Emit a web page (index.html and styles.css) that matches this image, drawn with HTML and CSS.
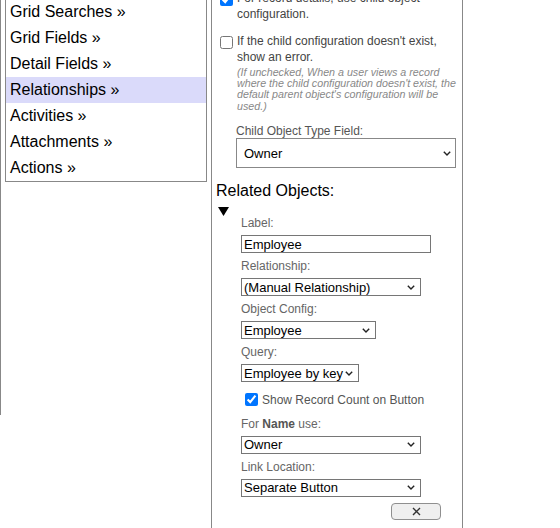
FILE: index.html
```html
<!DOCTYPE html>
<html>
<head>
<meta charset="utf-8">
<link rel="stylesheet" href="styles.css">
</head>
<body>
<div class="page">
  <div class="sidebar">
    <ul class="menu">
      <li>Grid Searches »</li>
      <li>Grid Fields »</li>
      <li>Detail Fields »</li>
      <li class="active">Relationships »</li>
      <li>Activities »</li>
      <li>Attachments »</li>
      <li>Actions »</li>
    </ul>
  </div>
  <div class="panel">
    <label class="check-row first"><input type="checkbox" checked><span class="check-text">For record details, use child object configuration.</span></label>
    <label class="check-row second"><input type="checkbox"><span class="check-text">If the child configuration doesn't exist, show an error.<span class="note">(If unchecked, When a user views a record where the child configuration doesn't exist, the default parent object's configuration will be used.)</span></span></label>
    <div class="type-field">
      <div class="type-label">Child Object Type Field:</div>
      <span class="select-wrap big">
        <select class="control type-select"><option>Owner</option></select>
        <svg class="chev" width="8" height="5" viewBox="0 0 8 5"><polyline points="0.8,0.8 4,4 7.2,0.8" fill="none" stroke="#222" stroke-width="1.4"/></svg>
      </span>
    </div>
    <h3 class="section-title">Related Objects:</h3>
    <div class="toggle"><svg width="11" height="9" viewBox="0 0 11 9"><polygon points="0,0 11,0 5.5,9" fill="#000"/></svg></div>
    <div class="related">
      <div class="field-label">Label:</div>
      <input class="control text-input" type="text" value="Employee">
      <div class="field-label">Relationship:</div>
      <span class="select-wrap w180">
        <select class="control"><option>(Manual Relationship)</option></select>
        <svg class="chev" width="8" height="5" viewBox="0 0 8 5"><polyline points="0.8,0.8 4,4 7.2,0.8" fill="none" stroke="#222" stroke-width="1.4"/></svg>
      </span>
      <div class="field-label">Object Config:</div>
      <span class="select-wrap w135">
        <select class="control"><option>Employee</option></select>
        <svg class="chev" width="8" height="5" viewBox="0 0 8 5"><polyline points="0.8,0.8 4,4 7.2,0.8" fill="none" stroke="#222" stroke-width="1.4"/></svg>
      </span>
      <div class="field-label">Query:</div>
      <span class="select-wrap w118">
        <select class="control"><option>Employee by key</option></select>
        <svg class="chev" width="8" height="5" viewBox="0 0 8 5"><polyline points="0.8,0.8 4,4 7.2,0.8" fill="none" stroke="#222" stroke-width="1.4"/></svg>
      </span>
      <label class="count-row"><input type="checkbox" checked><span>Show Record Count on Button</span></label>
      <div class="field-label">For <b>Name</b> use:</div>
      <span class="select-wrap w180">
        <select class="control"><option>Owner</option></select>
        <svg class="chev" width="8" height="5" viewBox="0 0 8 5"><polyline points="0.8,0.8 4,4 7.2,0.8" fill="none" stroke="#222" stroke-width="1.4"/></svg>
      </span>
      <div class="field-label">Link Location:</div>
      <span class="select-wrap w180">
        <select class="control"><option>Separate Button</option></select>
        <svg class="chev" width="8" height="5" viewBox="0 0 8 5"><polyline points="0.8,0.8 4,4 7.2,0.8" fill="none" stroke="#222" stroke-width="1.4"/></svg>
      </span>
      <button class="remove-btn" type="button"><svg width="9" height="9" viewBox="0 0 9 9"><path d="M1 1 L8 8 M8 1 L1 8" stroke="#333" stroke-width="1.4" fill="none"/></svg></button>
    </div>
  </div>
</div>
</body>
</html>
```
FILE: styles.css
```css
html, body {
  margin: 0;
  padding: 0;
  height: 528px;
  overflow: hidden;
  background: #fff;
}
body {
  font-family: "Liberation Sans", Arial, sans-serif;
  color: #000;
}
.page {
  display: flex;
  align-items: flex-start;
  margin-top: -2px;
}
.sidebar {
  width: 210px;
  height: 417px;
  border-left: 1px solid #888;
  flex: none;
}
.menu {
  list-style: none;
  margin: 0 0 0 4px;
  padding: 0;
  width: 200px;
  border: 1px solid #888;
}
.menu li {
  height: 26px;
  line-height: 26px;
  padding-left: 4px;
  font-size: 16px;
  color: #000;
}
.menu li.active {
  background: #dadafa;
}
.panel {
  width: 250px;
  min-height: 560px;
  border-left: 1px solid #888;
  border-right: 1px solid #888;
  flex: none;
}
.check-row {
  display: flex;
  align-items: flex-start;
  padding-left: 4px;
  font-size: 12px;
  line-height: 15.5px;
  color: #444;
}
.check-row input {
  width: 13px;
  height: 13px;
  margin: 2px 4px 0 4px;
  flex: none;
}
.check-text {
  flex: 1;
  padding-right: 2px;
}
.first {
  margin-top: -6.9px;
}
.second {
  margin-top: 11.9px;
}
.note {
  display: block;
  font-size: 10.7px;
  line-height: 11.3px;
  font-style: italic;
  color: #888;
  margin-top: 1.8px;
}
.type-field {
  margin: 12.3px 0 0 24px;
}
.type-label {
  font-size: 12px;
  line-height: 14px;
  color: #555;
}
.select-wrap {
  position: relative;
  display: block;
  margin: 5px 0 6px 0;
}
.select-wrap .control {
  width: 100%;
  margin: 0;
  -webkit-appearance: none;
  appearance: none;
}
.chev {
  position: absolute;
  right: 6px;
  top: 50%;
  margin-top: -2.5px;
  pointer-events: none;
}
.select-wrap.big {
  width: 220px;
  margin: 0;
}
.select-wrap.big .chev {
  right: 5px;
}
.type-select.control {
  height: 30px;
  padding-left: 7px;
  border-color: #888;
}
.section-title {
  margin: 13.4px 0 0 4px;
  font-size: 16px;
  line-height: 18px;
  font-weight: normal;
  color: #000;
}
.toggle {
  height: 9.6px;
  padding-top: 7px;
}
.toggle svg {
  display: block;
  margin-left: 6px;
}
.related {
  margin-left: 29px;
}
.field-label {
  font-size: 12px;
  line-height: 14px;
  color: #666;
}
.field-label b {
  color: #555;
}
.control {
  display: block;
  margin: 5px 0 6px 0;
  height: 18px;
  box-sizing: border-box;
  font: 13px "Liberation Sans", Arial, sans-serif;
  border: 1px solid #767676;
  border-radius: 0;
  background: #fff;
  color: #000;
  padding: 0 0 0 2px;
}
.text-input {
  width: 190px;
}
.w180 { width: 180px; }
.w135 { width: 135px; }
.w118 { width: 118px; }
.count-row {
  display: flex;
  align-items: center;
  margin: 10.5px 0 9.9px 4px;
  font-size: 12px;
  line-height: 14px;
  color: #555;
}
.count-row input {
  width: 13px;
  height: 13px;
  margin: 0 4px 0 0;
  flex: none;
}
.remove-btn {
  display: flex;
  align-items: center;
  justify-content: center;
  width: 50px;
  height: 17px;
  margin-left: 150px;
  padding: 0;
  border: 1px solid #8f8f8f;
  border-radius: 4px;
  background: #efefef;
}
```
